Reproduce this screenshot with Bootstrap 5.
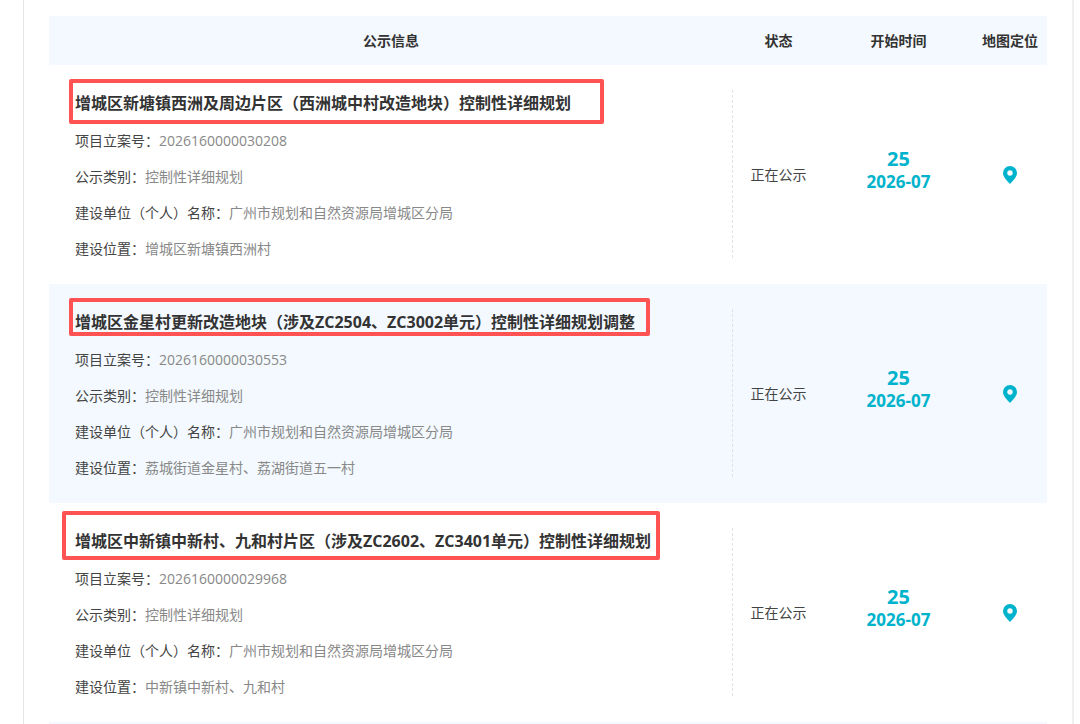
<!DOCTYPE html>
<html lang="zh-CN">
<head>
<meta charset="utf-8">
<meta name="viewport" content="width=device-width, initial-scale=1">
<title>公示信息</title>
<link rel="stylesheet" href="https://cdn.jsdelivr.net/npm/bootstrap@5.3.0/dist/css/bootstrap.min.css">
<style>
  body { font-family: "Open Sans", "Noto Sans CJK SC", sans-serif; font-size: 14px; line-height: 18px; color: #444; }
  .panel { margin: 0 6px 0 23px; padding: 16px 25px 0; border-left: 1px solid #e6e6e6; border-right: 2px solid #f0f0f0; }
  .notices { table-layout: fixed; }
  .notices th, .notices td { padding: 0; text-align: center; vertical-align: middle; }
  .notices thead th { height: 49px; color: #333; background: #f3f9fe; }
  .notices tbody tr:nth-child(even) { background: #f3f9fe; }
  .notices td.info-cell { padding: 25px 0 26px 26px; text-align: left; }
  .col-status { width: 91px; }
  .col-date { width: 149px; }
  .col-map { width: 74px; }
  .info { border-right: 1px dashed #e2e2e2; }
  .info-title { font-size: 16px; line-height: 26px; margin: 0 0 16px; font-weight: 700; }
  .info-title a { color: #333; }
  .info dl { display: grid; gap: 18px; margin: 0; }
  .info dt { font-weight: 400; }
  .info dd { margin: 0; color: #888; }
  /* Red frame laid over each title */
  .frame { position: absolute; border: 4px solid #ff5252; border-radius: 2px; pointer-events: none; }
  .frame-a { inset: -11px auto -8px -6px; width: 535px; }
  .frame-b { inset: -11px auto -1px -6px; width: 581px; }
  .frame-c { inset: -17px auto -6px -13px; width: 598px; }
  .date { color: #00b3cc; font-weight: 700; line-height: 23px; padding-bottom: 10px; }
  .date-day { font-size: 20px; }
  .date-month { font-size: 17px; }
  .pin { color: #00b3cc; }
  .next-strip { height: 2px; background: #f3f9fe; }
</style>
</head>
<body>
<main class="panel min-vh-100">
  <table class="notices w-100">
    <colgroup><col><col class="col-status"><col class="col-date"><col class="col-map"></colgroup>
    <thead>
      <tr><th scope="col">公示信息</th><th scope="col">状态</th><th scope="col">开始时间</th><th scope="col">地图定位</th></tr>
    </thead>
    <tbody>
      <tr>
        <td class="info-cell"><div class="info">
          <h2 class="info-title position-relative"><a href="#" class="text-decoration-none">增城区新塘镇西洲及周边片区（西洲城中村改造地块）控制性详细规划</a><span class="frame frame-a"></span></h2>
          <dl>
            <div class="d-flex"><dt>项目立案号：</dt><dd>2026160000030208</dd></div>
            <div class="d-flex"><dt>公示类别：</dt><dd>控制性详细规划</dd></div>
            <div class="d-flex"><dt>建设单位（个人）名称：</dt><dd>广州市规划和自然资源局增城区分局</dd></div>
            <div class="d-flex"><dt>建设位置：</dt><dd>增城区新塘镇西洲村</dd></div>
          </dl>
        </div></td>
        <td>正在公示</td>
        <td><div class="date"><div class="date-day">25</div><div class="date-month">2026-07</div></div></td>
        <td><button type="button" class="pin btn border-0 p-0" aria-label="地图定位"><svg class="d-block" width="14" height="18" viewBox="0 0 14 18" fill="currentColor"><path fill-rule="evenodd" d="M7 0a7 7 0 0 0-7 7c0 3.700 3.400 7.200 7 11 3.600-3.800 7-7.300 7-11a7 7 0 0 0-7-7zm0 4.300a2.700 2.700 0 1 1 0 5.400 2.700 2.700 0 0 1 0-5.400z"/></svg></button></td>
      </tr>
      <tr>
        <td class="info-cell"><div class="info">
          <h2 class="info-title position-relative"><a href="#" class="text-decoration-none">增城区金星村更新改造地块（涉及ZC2504、ZC3002单元）控制性详细规划调整</a><span class="frame frame-b"></span></h2>
          <dl>
            <div class="d-flex"><dt>项目立案号：</dt><dd>2026160000030553</dd></div>
            <div class="d-flex"><dt>公示类别：</dt><dd>控制性详细规划</dd></div>
            <div class="d-flex"><dt>建设单位（个人）名称：</dt><dd>广州市规划和自然资源局增城区分局</dd></div>
            <div class="d-flex"><dt>建设位置：</dt><dd>荔城街道金星村、荔湖街道五一村</dd></div>
          </dl>
        </div></td>
        <td>正在公示</td>
        <td><div class="date"><div class="date-day">25</div><div class="date-month">2026-07</div></div></td>
        <td><button type="button" class="pin btn border-0 p-0" aria-label="地图定位"><svg class="d-block" width="14" height="18" viewBox="0 0 14 18" fill="currentColor"><path fill-rule="evenodd" d="M7 0a7 7 0 0 0-7 7c0 3.700 3.400 7.200 7 11 3.600-3.800 7-7.300 7-11a7 7 0 0 0-7-7zm0 4.300a2.700 2.700 0 1 1 0 5.400 2.700 2.700 0 0 1 0-5.400z"/></svg></button></td>
      </tr>
      <tr>
        <td class="info-cell"><div class="info">
          <h2 class="info-title position-relative"><a href="#" class="text-decoration-none">增城区中新镇中新村、九和村片区（涉及ZC2602、ZC3401单元）控制性详细规划</a><span class="frame frame-c"></span></h2>
          <dl>
            <div class="d-flex"><dt>项目立案号：</dt><dd>2026160000029968</dd></div>
            <div class="d-flex"><dt>公示类别：</dt><dd>控制性详细规划</dd></div>
            <div class="d-flex"><dt>建设单位（个人）名称：</dt><dd>广州市规划和自然资源局增城区分局</dd></div>
            <div class="d-flex"><dt>建设位置：</dt><dd>中新镇中新村、九和村</dd></div>
          </dl>
        </div></td>
        <td>正在公示</td>
        <td><div class="date"><div class="date-day">25</div><div class="date-month">2026-07</div></div></td>
        <td><button type="button" class="pin btn border-0 p-0" aria-label="地图定位"><svg class="d-block" width="14" height="18" viewBox="0 0 14 18" fill="currentColor"><path fill-rule="evenodd" d="M7 0a7 7 0 0 0-7 7c0 3.700 3.400 7.200 7 11 3.600-3.800 7-7.300 7-11a7 7 0 0 0-7-7zm0 4.300a2.700 2.700 0 1 1 0 5.400 2.700 2.700 0 0 1 0-5.400z"/></svg></button></td>
      </tr>
    </tbody>
  </table>
  <div class="next-strip"></div>
</main>
<script src="https://cdn.jsdelivr.net/npm/bootstrap@5.3.0/dist/js/bootstrap.bundle.min.js"></script>
</body>
</html>
